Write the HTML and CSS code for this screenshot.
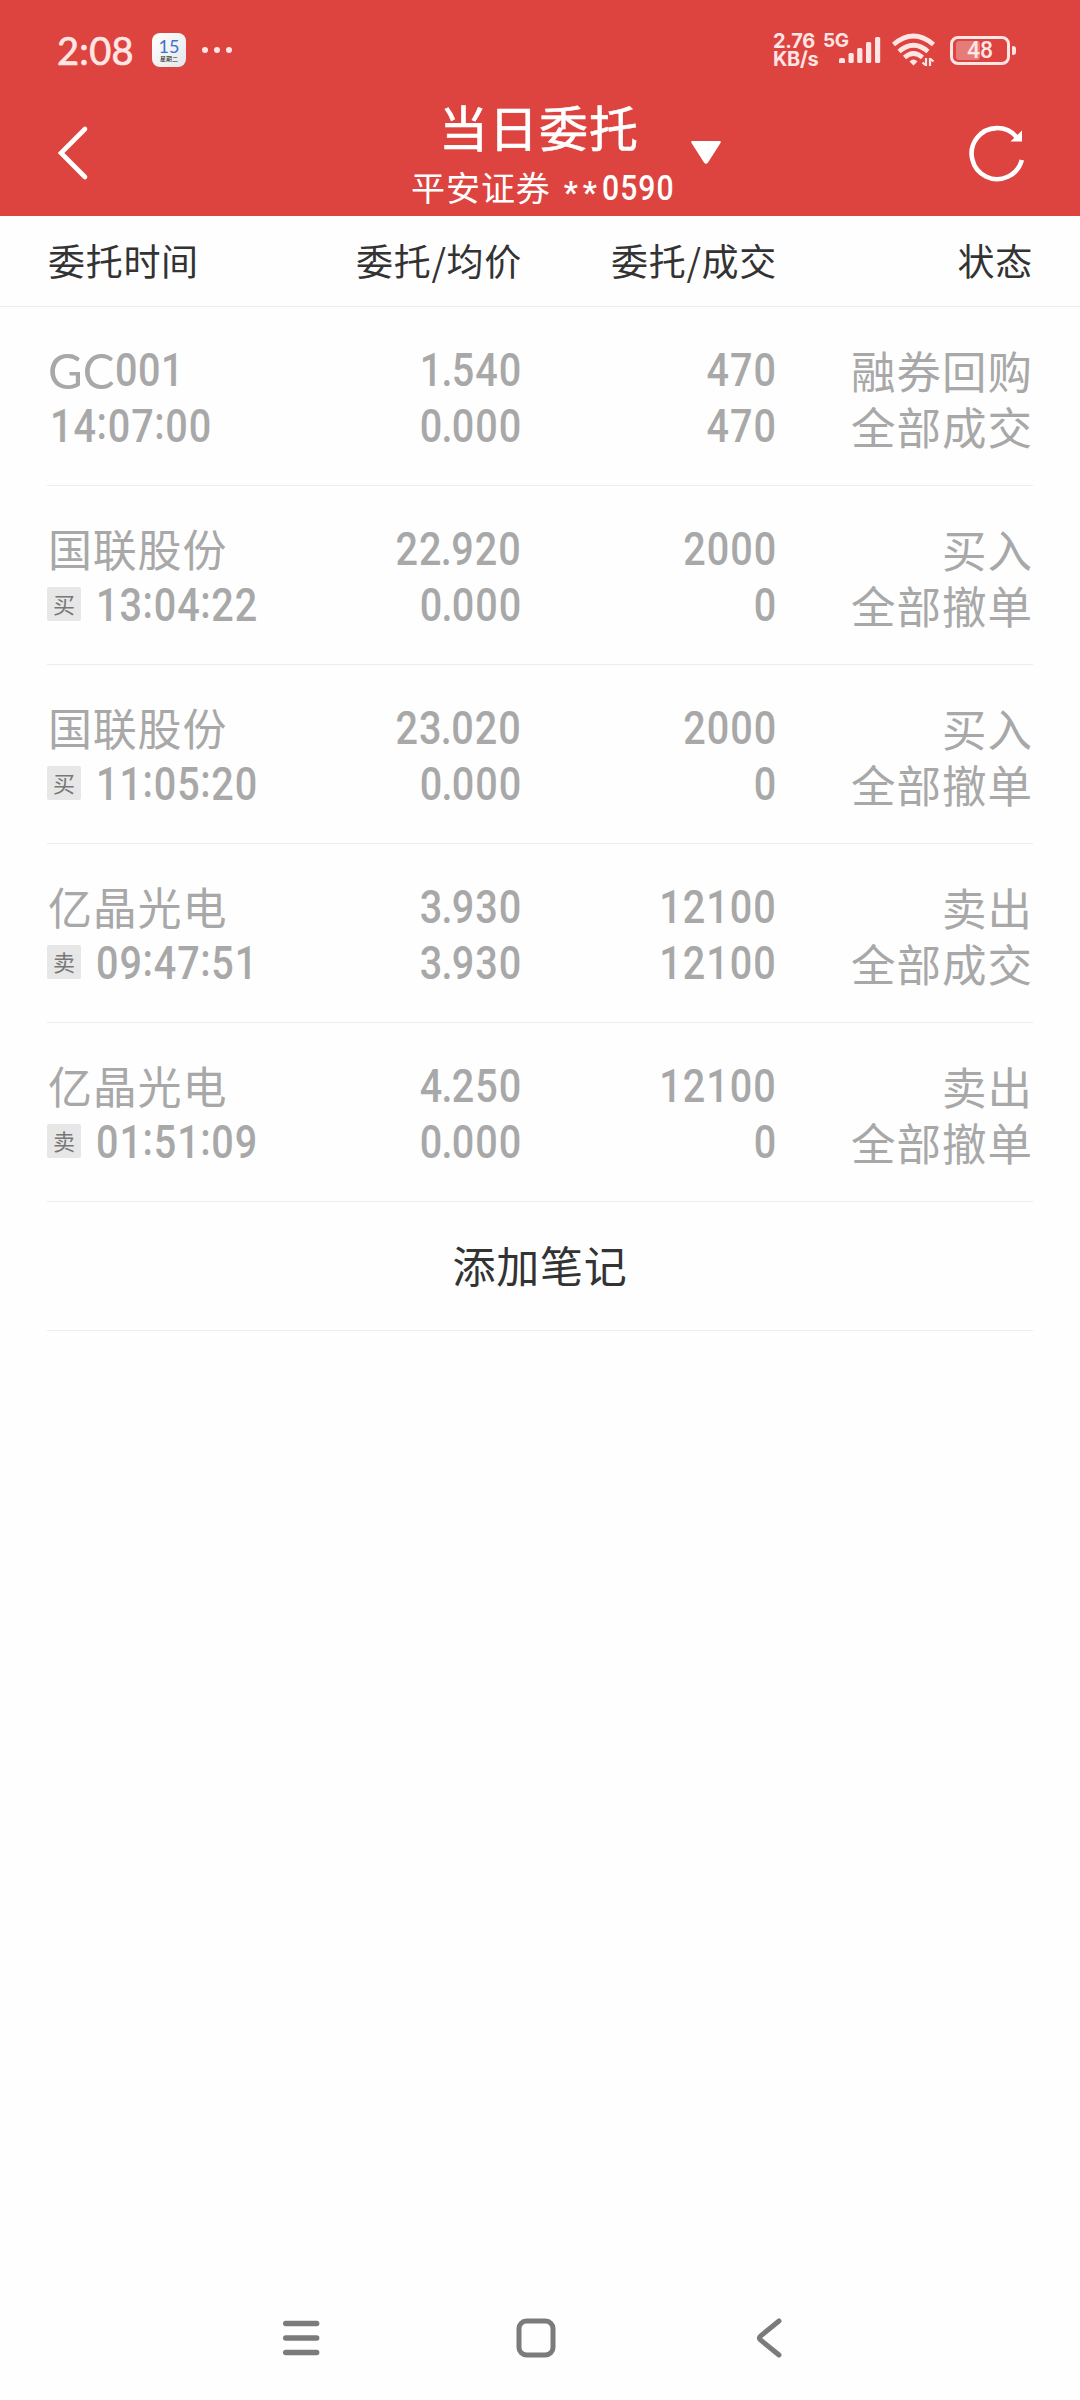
FILE: index.html
```
<!DOCTYPE html>
<html lang="zh-CN">
<head>
	<meta charset="utf-8">
	<title>当日委托</title>
	<link rel="stylesheet" href="styles.css">
</head>
<body>
	<header class="top">
		<div class="status-bar">
			<span class="clock">2:08</span>
			<div class="cal">
				<span class="cal-day">15</span>
				<span class="cal-week">星期二</span>
			</div>
			<div class="dots"><i></i><i></i><i></i></div>
			<div class="net-speed"><span>2.76</span><span>KB/s</span></div>
			<div class="signal">
				<span>5G</span>
				<svg width="42" height="28" viewBox="0 0 42 28" fill="#ffe6e5">
					<path d="M0 27v-3q0-2 2-2h2q2 0 2 2v3z"/>
					<rect x="9.500" y="17" width="5.200" height="10" rx="1.500"/>
					<rect x="18.200" y="12" width="5.200" height="15" rx="1.500"/>
					<rect x="27" y="6" width="5.200" height="21" rx="1.500"/>
					<rect x="36" y="1" width="5.200" height="26" rx="1.500"/>
				</svg>
			</div>
			<svg class="wifi" width="44" height="34" viewBox="0 0 44 34" fill="none" stroke="#ffe6e5" stroke-width="4.600">
				<path d="M1.500 11.500Q21.500-5.500 41.500 11.500"/>
				<path d="M7 18.500Q21.500 6 36 18.500"/>
				<path d="M12.500 24.500Q21.500 16.500 30.500 24.500"/>
				<path d="M17.500 28.500q4-4 8 0l-4 4z" fill="#ffe6e5" stroke="none"/>
				<path d="M34 25v8M30.500 29.500l3.500 3M38 33v-8M38 25.500l3.500 3" stroke-width="2.200"/>
			</svg>
			<div class="battery">
				<div class="battery-level"></div>
				<span>48</span>
			</div>
			<div class="battery-tip"></div>
		</div>
		<div class="title-bar">
			<svg class="back" width="32" height="56" viewBox="0 0 32 56" fill="none" stroke="#fff" stroke-width="4.600">
				<path d="M28 4L4 28l24 24" stroke-linecap="round"/>
			</svg>
			<div class="title">
				<h1>当日委托</h1>
				<p>平安证券 <b class="stars">**</b><b class="acct">0590</b></p>
			</div>
			<svg class="arrow" width="32" height="26" viewBox="0 0 32 26" fill="#fff">
				<path d="M2.500 1h27q2 0 1 2L18 22.500q-2 2.500-4 0L1.500 3q-1-2 1-2z"/>
			</svg>
			<svg class="refresh" width="60" height="60" viewBox="0 0 60 60">
				<path d="M53.800 37A25.500 25.500 0 1 1 48.500 14" fill="none" stroke="#fff" stroke-width="4.600"/>
				<path d="M42.500 18.500H54V7.500z" fill="#fff"/>
			</svg>
		</div>
	</header>

	<div class="cols table-head">
		<span>委托时间</span>
		<span>委托/均价</span>
		<span>委托/成交</span>
		<span>状态</span>
	</div>

	<main class="list">
		<div class="cols row">
			<div>
				<p class="name"><span class="code">GC</span><span class="num code-num">001</span></p>
				<p><span class="num time">14<i>:</i>07<i>:</i>00</span></p>
			</div>
			<div><p><span class="num">1<i>.</i>540</span></p><p><span class="num">0<i>.</i>000</span></p></div>
			<div><p><span class="num">470</span></p><p><span class="num">470</span></p></div>
			<div class="state"><p>融券回购</p><p>全部成交</p></div>
		</div>
		<div class="cols row">
			<div>
				<p class="name">国联股份</p>
				<p><span class="tag">买</span><span class="num time">13<i>:</i>04<i>:</i>22</span></p>
			</div>
			<div><p><span class="num">22<i>.</i>920</span></p><p><span class="num">0<i>.</i>000</span></p></div>
			<div><p><span class="num">2000</span></p><p><span class="num">0</span></p></div>
			<div class="state"><p>买入</p><p>全部撤单</p></div>
		</div>
		<div class="cols row">
			<div>
				<p class="name">国联股份</p>
				<p><span class="tag">买</span><span class="num time">11<i>:</i>05<i>:</i>20</span></p>
			</div>
			<div><p><span class="num">23<i>.</i>020</span></p><p><span class="num">0<i>.</i>000</span></p></div>
			<div><p><span class="num">2000</span></p><p><span class="num">0</span></p></div>
			<div class="state"><p>买入</p><p>全部撤单</p></div>
		</div>
		<div class="cols row">
			<div>
				<p class="name">亿晶光电</p>
				<p><span class="tag">卖</span><span class="num time">09<i>:</i>47<i>:</i>51</span></p>
			</div>
			<div><p><span class="num">3<i>.</i>930</span></p><p><span class="num">3<i>.</i>930</span></p></div>
			<div><p><span class="num">12100</span></p><p><span class="num">12100</span></p></div>
			<div class="state"><p>卖出</p><p>全部成交</p></div>
		</div>
		<div class="cols row">
			<div>
				<p class="name">亿晶光电</p>
				<p><span class="tag">卖</span><span class="num time">01<i>:</i>51<i>:</i>09</span></p>
			</div>
			<div><p><span class="num">4<i>.</i>250</span></p><p><span class="num">0<i>.</i>000</span></p></div>
			<div><p><span class="num">12100</span></p><p><span class="num">0</span></p></div>
			<div class="state"><p>卖出</p><p>全部撤单</p></div>
		</div>
		<div class="add-note">添加笔记</div>
	</main>

	<nav class="nav-bar">
		<svg width="40" height="44" viewBox="0 0 40 44" fill="none" stroke="#7b7b7b" stroke-width="5.400" stroke-linecap="round">
			<path d="M4.700 7.500h31M4.700 22h31M4.700 36.500h31"/>
		</svg>
		<svg class="home" width="44" height="44" viewBox="0 0 44 44" fill="none" stroke="#7b7b7b" stroke-width="5">
			<rect x="5" y="5" width="34" height="34" rx="7.500"/>
		</svg>
		<svg width="30" height="44" viewBox="0 0 30 44" fill="none" stroke="#7b7b7b" stroke-width="5" stroke-linecap="round">
			<path d="M25 5L6.500 20q-2 2 0 4L25 39"/>
		</svg>
	</nav>
</body>
</html>
```
FILE: styles.css
```
*{
	margin: 0;
	padding: 0;
	box-sizing: border-box;
}
body{
	width: 1080px;
	height: 2400px;
	display: flex;
	flex-direction: column;
	background: #fefefe;
	color: #333;
	font-family: "Noto Sans CJK SC", sans-serif;
}
svg{
	display: block;
	flex: none;
}
i, b{
	font-style: normal;
	font-weight: inherit;
}
.top{
	height: 216px;
	background: #dd4440;
	color: #fff;
}

/* status bar */
.status-bar{
	height: 100px;
	padding-left: 57px;
	display: flex;
	align-items: center;
	color: #ffe6e5;
}
.clock{
	width: 95px;
	font: 400 38px/1 Lato, sans-serif;
	letter-spacing: .3px;
	-webkit-text-stroke: .7px #ffe6e5;
}
.cal{
	width: 34px;
	height: 34px;
	padding-top: 5px;
	border-radius: 8px;
	background: linear-gradient(135deg, #fff, #e4e6ea);
	text-align: center;
	white-space: nowrap;
}
.cal-day{
	display: block;
	font: 400 18px/16px Lato, sans-serif;
	color: #3f73c8;
}
.cal-week{
	display: block;
	font-size: 6px;
	line-height: 9px;
	color: #222;
}
.dots{
	display: flex;
	gap: 6px;
	margin-left: 16px;
}
.dots i{
	width: 6px;
	height: 6px;
	border-radius: 50%;
	background: #ffe6e5;
}
.net-speed{
	width: 50px;
	margin-left: 541px;
	font: 700 20px/18px Inter, sans-serif;
	letter-spacing: -.3px;
}
.net-speed span{
	display: block;
}
.signal{
	width: 58px;
	height: 34px;
	position: relative;
}
.signal span{
	font: 700 19px/17px Inter, sans-serif;
	letter-spacing: -.5px;
	position: absolute;
	left: 0;
	top: -1px;
}
.signal svg{
	position: absolute;
	left: 16px;
	top: 3px;
}
.wifi{
	margin-left: 11px;
}
.battery{
	width: 60px;
	height: 29px;
	margin-left: 14px;
	border: 3px solid #ffe6e5;
	border-radius: 8px;
	position: relative;
	text-align: center;
	font: 500 23px/23px Roboto, sans-serif;
}
.battery-level{
	position: absolute;
	left: 3px;
	top: 2px;
	width: 24px;
	height: 19px;
	border-radius: 3px;
	background: #e77b78;
}
.battery span{
	position: relative;
}
.battery-tip{
	width: 4px;
	height: 9px;
	margin-left: 2px;
	border-radius: 1px 3px 3px 1px;
	background: #ffe6e5;
}

/* title */
.title-bar{
	height: 116px;
	padding: 0 52px 0 57px;
	display: flex;
	align-items: flex-start;
}
.back{
	margin-top: 25px;
}
.title{
	width: 270px;
	margin-left: 317px;
	text-align: center;
	white-space: nowrap;
}
.title h1{
	padding-right: 4px;
	font-size: 49px;
	line-height: 52px;
	font-weight: 400;
	letter-spacing: 1px;
	-webkit-text-stroke: .6px #fff;
}
.title p{
	display: flex;
	align-items: center;
	justify-content: center;
	margin-top: 7px;
	font-size: 34px;
	line-height: 56px;
	letter-spacing: .9px;
}
.stars{
	font: 700 31px/34px Roboto, sans-serif;
	letter-spacing: 5px;
	margin: 12px 0 0 13px;
}
.acct{
	width: 69px;
	font: 500 35px/40px Roboto, sans-serif;
	letter-spacing: 1.200px;
	transform: scaleX(.86);
	transform-origin: left;
	margin-top: 3px;
}
.arrow{
	margin: 40px 0 0 14px;
}
.refresh{
	margin: 23px 0 0 auto;
}

/* order table */
.cols{
	display: grid;
	grid-template-columns: 254px 221px 255px 256px;
	text-align: right;
	white-space: nowrap;
}
.cols > :first-child{
	text-align: left;
}
.table-head{
	height: 91px;
	padding: 0 47px;
	border-bottom: 1px solid #ebebeb;
	font-size: 37px;
	line-height: 88px;
	letter-spacing: .7px;
}
.table-head > :first-child{
	padding-left: 1px;
}
.list{
	flex: 1;
	padding: 0 47px;
}
.row{
	height: 179px;
	padding-top: 35px;
	border-bottom: 1px solid #ededed;
	color: #a8a8a8;
}
.row p{
	height: 56px;
	line-height: 56px;
	font-size: 44px;
	display: flex;
	align-items: center;
	justify-content: flex-end;
}
.row > :first-child p{
	justify-content: flex-start;
}
.row .name{
	padding: 0 0 3px 1px;
	letter-spacing: .8px;
}
.num{
	font: 500 46px/56px Roboto, sans-serif;
	letter-spacing: 1.200px;
	transform: scaleX(.86);
	transform-origin: right;
}
.row > :first-child .num{
	transform-origin: left;
	margin-left: 3px;
}
.num i{
	margin: 0 -2px;
}
.time i{
	margin: 0 -.5px;
	vertical-align: 3px;
	line-height: 1;
}
.code{
	font: 400 49px/56px Lato, sans-serif;
	letter-spacing: 0;
	transform: scaleX(.97);
	transform-origin: left;
	padding-top: 3px;
}
.row > :first-child .code-num{
	margin: 3px 0 0 -2px;
	letter-spacing: .6px;
}
.row .state p{
	font-size: 44.500px;
	letter-spacing: 1px;
}
.tag{
	width: 34px;
	height: 34px;
	margin: -3px 12px 0 0;
	border-radius: 2px;
	background: #e7e7e7;
	color: #777;
	font-size: 22px;
	line-height: 33px;
	text-align: center;
}
.add-note{
	height: 129px;
	border-bottom: 1px solid #ededed;
	font-size: 43px;
	line-height: 124px;
	letter-spacing: .8px;
	text-align: center;
}

/* system buttons */
.nav-bar{
	height: 125px;
	padding: 0 296px 0 281px;
	display: flex;
	align-items: center;
	justify-content: space-between;
}
.home{
	margin-right: 4px;
}
```
